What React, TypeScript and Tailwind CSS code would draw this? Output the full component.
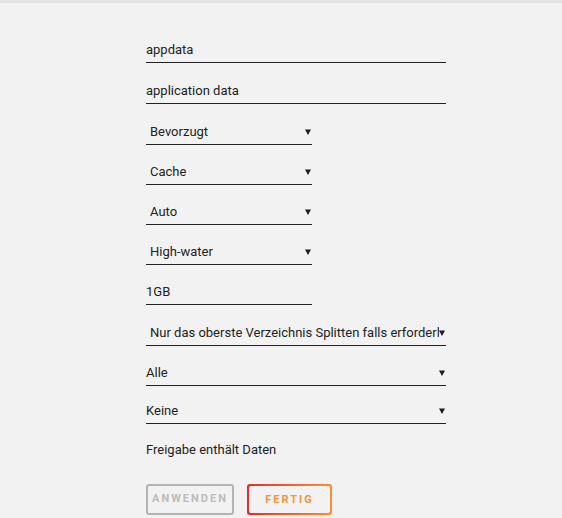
import React from 'react';

// Share settings form: text fields, dropdowns and the apply/done buttons.

const Caret = () => (
  <svg width="6" height="6" viewBox="0 0 6 6" className="shrink-0">
    <path d="M0 0.5 H6 L3 6 Z" fill="#1c1c1c" />
  </svg>
);

function TextField({ value, wide = true, h }: { value: string; wide?: boolean; h: string }) {
  return (
    <div className={`flex items-end ${h}`}>
      <div
        className={`flex h-[26px] items-center border-b border-[#222] text-[13px] text-[#222] ${
          wide ? 'w-[300px]' : 'w-[166px]'
        }`}
      >
        {value}
      </div>
    </div>
  );
}

function SelectField({ value, wide = false, h, inset = true }: { value: string; wide?: boolean; h: string; inset?: boolean }) {
  return (
    <div className={`flex items-end ${h}`}>
      <div
        className={`flex h-[26px] items-center justify-between border-b border-[#222] text-[13px] text-[#222] ${
          wide ? 'w-[300px]' : 'w-[166px]'
        } ${inset ? 'pl-1 pr-[1px]' : 'pr-[1px]'}`}
      >
        <span className="overflow-hidden whitespace-nowrap">{value}</span>
        <Caret />
      </div>
    </div>
  );
}

export default function App() {
  return (
    <div
      className="min-h-[518px] w-full border-t-[3px] border-[#e4e4e4] bg-[#f2f2f2]"
      style={{ fontFamily: 'Roboto, "Noto Sans", sans-serif' }}
    >
      <div className="ml-[146px] flex flex-col pt-[19px]">
        <TextField value="appdata" h="h-[41px]" />
        <TextField value="application data" h="h-[41px]" />
        <SelectField value="Bevorzugt" h="h-[41px]" />
        <SelectField value="Cache" h="h-[40px]" />
        <SelectField value="Auto" h="h-[40px]" />
        <SelectField value="High-water" h="h-[40px]" />
        <TextField value="1GB" wide={false} h="h-[40px]" />
        <SelectField value="Nur das oberste Verzeichnis Splitten falls erforderlich" wide h="h-[41px]" />
        <SelectField value="Alle" wide inset={false} h="h-[40px]" />
        <SelectField value="Keine" wide inset={false} h="h-[38px]" />

        <div className="mt-[16px] text-[13px] text-[#222]">Freigabe enthält Daten</div>

        <div className="mt-[24px] flex gap-[13px]">
          <button
            type="button"
            className="h-[31px] w-[88px] rounded-[3px] border-2 border-[#b3b3b3] text-[11px] font-bold tracking-[2px] text-[#bcbcbc]"
          >
            ANWENDEN
          </button>
          <div className="rounded-[3px] bg-gradient-to-r from-[#e22828] to-[#ff8c2f] p-[2px]">
            <button
              type="button"
              className="h-[27px] w-[81px] rounded-[2px] bg-[#f2f2f2] text-[11px] font-bold tracking-[2px] text-[#f8923c]"
            >
              FERTIG
            </button>
          </div>
        </div>
      </div>
    </div>
  );
}
